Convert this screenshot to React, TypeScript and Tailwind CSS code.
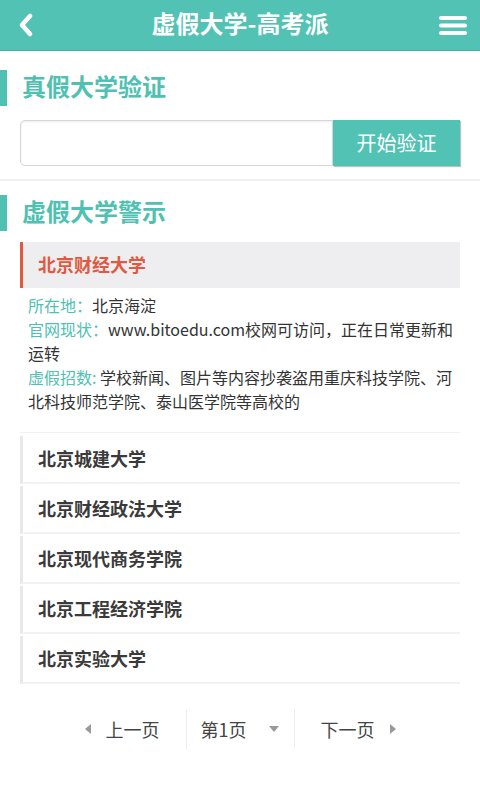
import React from "react";

const others = ["北京城建大学", "北京财经政法大学", "北京现代商务学院", "北京工程经济学院", "北京实验大学"];

const SectionTitle: React.FC<{ title: string }> = ({ title }) => (
  <div className="flex items-center h-[36px]">
    <div className="w-[7px] h-[36px] bg-[#4fc1b2]" />
    <h2 className="ml-[15px] pb-[5px] text-[24px] font-bold text-[#4fc1b2] leading-none">{title}</h2>
  </div>
);

export default function App() {
  return (
    <div
      className="w-[480px] h-[800px] bg-white overflow-hidden"
      style={{ fontFamily: '"Noto Sans CJK SC", "Noto Sans", sans-serif' }}
    >
      <header className="h-[51px] bg-[#52c2b4] border-b border-[#48b0a3] flex items-center px-[12px]">
        <div className="w-[44px] flex items-center pl-[6px]">
          <svg width="16" height="24" viewBox="0 0 16 24">
            <path d="M12 3 L4 12 L12 21" stroke="white" strokeWidth="4.5" fill="none" strokeLinecap="round" strokeLinejoin="round" />
          </svg>
        </div>
        <h1 className="flex-1 text-center pb-[4px] text-[24px] font-bold text-white leading-none">虚假大学-高考派</h1>
        <div className="w-[44px] flex items-center justify-end">
          <svg width="30" height="24" viewBox="0 0 30 24">
            <rect x="1" y="3" width="28" height="4" rx="2" fill="white" />
            <rect x="1" y="10.5" width="28" height="4" rx="2" fill="white" />
            <rect x="1" y="18" width="28" height="4" rx="2" fill="white" />
          </svg>
        </div>
      </header>

      <div className="pt-[19px]">
        <SectionTitle title="真假大学验证" />
        <div className="mx-[20px] mt-[14px] flex h-[46px]">
          <input className="flex-1 min-w-0 border border-[#d6d6d6] rounded-l-[5px] shadow-[inset_0_1px_2px_rgba(0,0,0,0.08)] outline-none" />
          <button className="w-[127px] bg-[#52c2b4] text-white text-[20px] shadow-[1px_1px_1px_rgba(0,0,0,0.25)]">
            开始验证
          </button>
        </div>
        <div className="mt-[13px] h-[2px] bg-[#f0f0f0]" />
      </div>

      <div className="pt-[14px]">
        <SectionTitle title="虚假大学警示" />
        <div className="mx-[20px] mt-[11px]">
          <div className="h-[46px] bg-[#eeedf0] border-l-[3px] border-[#e05a42] flex items-center pl-[15px]">
            <span className="pb-[2px] text-[18px] font-bold text-[#e05a42]">北京财经大学</span>
          </div>
          <div className="pt-[5px] pl-[8px] text-[16px] leading-[24px] text-[#333]">
            <p>
              <span className="text-[#4fc1b2]">所在地：</span>
              <span>北京海淀</span>
            </p>
            <p>
              <span className="text-[#4fc1b2]">官网现状：</span>
              <span>www.bitoedu.com校网可访问，正在日常更新和运转</span>
            </p>
            <p>
              <span className="text-[#4fc1b2]">虚假招数:</span>
              <span> 学校新闻、图片等内容抄袭盗用重庆科技学院、河北科技师范学院、泰山医学院等高校的</span>
            </p>
          </div>
          <div className="mt-[19px] border-t border-[#f0f0f0] flex flex-col gap-[2px] pt-[3px]">
            {others.map((name) => (
              <div
                key={name}
                className="h-[48px] border-l-[3px] border-[#e8e8e8] border-b-2 border-b-[#f2f2f2] flex items-center pl-[15px]"
              >
                <span className="pb-[2px] text-[18px] font-bold text-[#3a3a3a]">{name}</span>
              </div>
            ))}
          </div>
        </div>
      </div>

      <div className="mt-[24px] flex justify-center items-center h-[42px] text-[18px] text-[#444]">
        <div className="flex items-center w-[106px] justify-end pr-[26px] gap-[15px]">
          <svg width="6" height="10" viewBox="0 0 6 10">
            <path d="M6 0 L0 5 L6 10 Z" fill="#999" />
          </svg>
          <span>上一页</span>
        </div>
        <div className="w-px h-[40px] bg-[#eeeeee]" />
        <div className="flex items-center w-[107px] pl-[14px] gap-[22px]">
          <span>第1页</span>
          <svg width="10" height="6" viewBox="0 0 10 6">
            <path d="M0 0 L10 0 L5 6 Z" fill="#999" />
          </svg>
        </div>
        <div className="w-px h-[40px] bg-[#eeeeee]" />
        <div className="flex items-center w-[106px] pl-[26px] gap-[15px]">
          <span>下一页</span>
          <svg width="6" height="10" viewBox="0 0 6 10">
            <path d="M0 0 L6 5 L0 10 Z" fill="#999" />
          </svg>
        </div>
      </div>
    </div>
  );
}
